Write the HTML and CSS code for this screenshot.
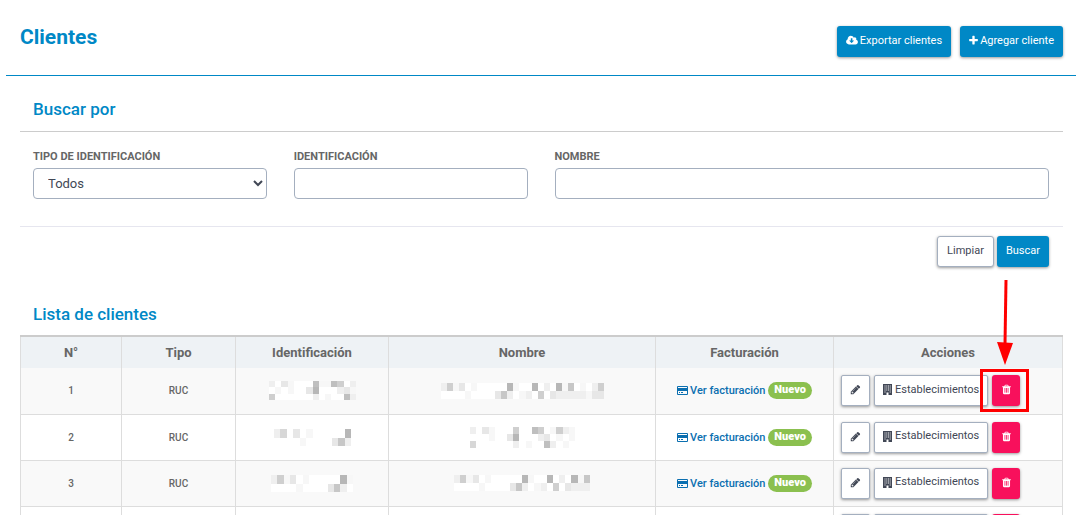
FILE: index.html
```
<!DOCTYPE html>
<html lang="es">

<head>
    <meta charset="UTF-8">
    <meta name="viewport" content="width=device-width, initial-scale=1.0">
    <title>Clientes</title>
    <link rel="stylesheet" href="styles.css">
</head>

<body>
    <svg class="sprite" aria-hidden="true">
        <symbol id="cloud" viewBox="-64 0 1920 1792">
            <path d="M1216 928q0-14-9-23t-23-9h-224v-352q0-13-9.500-22.500t-22.500-9.500h-192q-13 0-22.500 9.500t-9.500 22.500v352h-224q-13 0-22.500 9.500t-9.500 22.500q0 14 9 23l352 352q9 9 23 9t23-9l351-351q10-12 10-24zm640 224q0 159-112.500 271.500t-271.500 112.500h-1088q-185 0-316.500-131.500t-131.500-316.500q0-130 70-240t188-165q-2-30-2-43 0-212 150-362t362-150q156 0 285.500 87t188.500 231q71-62 166-62 106 0 181 75t75 181q0 76-41 138 130 31 213.500 135.500t83.500 238.500z"/>
        </symbol>
        <symbol id="plus" viewBox="192 0 1408 1792">
            <path d="M1600 736v192q0 40-28 68t-68 28h-416v416q0 40-28 68t-68 28h-192q-40 0-68-28t-28-68v-416h-416q-40 0-68-28t-28-68v-192q0-40 28-68t68-28h416v-416q0-40 28-68t68-28h192q40 0 68 28t28 68v416h416q40 0 68 28t28 68z"/>
        </symbol>
        <symbol id="pencil" viewBox="0 0 1792 1792">
            <path d="M491 1536l91-91-235-235-91 91v107h128v128h107zm523-928q0-22-22-22-10 0-17 7l-542 542q-7 7-7 17 0 22 22 22 10 0 17-7l542-542q7-7 7-17zm-54-192l416 416-832 832h-416v-416zm683 96q0 53-37 90l-166 166-416-416 166-165q36-38 90-38 53 0 91 38l235 234q37 39 37 91z"/>
        </symbol>
        <symbol id="trash" viewBox="192 0 1408 1792">
            <path d="M704 1376v-704q0-14-9-23t-23-9h-64q-14 0-23 9t-9 23v704q0 14 9 23t23 9h64q14 0 23-9t9-23zm256 0v-704q0-14-9-23t-23-9h-64q-14 0-23 9t-9 23v704q0 14 9 23t23 9h64q14 0 23-9t9-23zm256 0v-704q0-14-9-23t-23-9h-64q-14 0-23 9t-9 23v704q0 14 9 23t23 9h64q14 0 23-9t9-23zm-544-992h448l-48-117q-7-9-17-11h-317q-10 2-17 11zm928 32v64q0 14-9 23t-23 9h-96v948q0 83-47 143.500t-113 60.500h-832q-66 0-113-58.500t-47-141.500v-952h-96q-14 0-23-9t-9-23v-64q0-14 9-23t23-9h309l70-167q15-37 54-63t79-26h320q40 0 79 26t54 63l70 167h309q14 0 23 9t9 23z"/>
        </symbol>
        <symbol id="building" viewBox="0 0 9 11">
            <path fill-rule="evenodd" d="M0 0h9v11H0zM1.500 1.500v1h1v-1zM3.300 1.500v1h1v-1zM5 1.500v1h1v-1zM6.700 1.500v1h1v-1zM1.500 3.500v1h1v-1zM3.300 3.500v1h1v-1zM5 3.500v1h1v-1zM6.700 3.500v1h1v-1zM1.500 5.500v1h1v-1zM3.300 5.500v1h1v-1zM5 5.500v1h1v-1zM6.700 5.500v1h1v-1zM1.500 7.500v1h1v-1zM6.700 7.500v1h1v-1zM3.500 8.500v2.500h2V8.500z"/>
        </symbol>
        <symbol id="card" viewBox="0 0 11 9">
            <path fill-rule="evenodd" d="M1 0h9q1 0 1 1v7q0 1-1 1H1q-1 0-1-1V1q0-1 1-1zM1 1v1h9V1zM1 5v3h9V5zM2 6h1v1H2zM4 6h2v1H4z"/>
        </symbol>
    </svg>

    <div class="page">
        <header class="page-header">
            <h1>Clientes</h1>
            <div class="header-buttons">
                <button type="button" class="btn btn-primary"><svg class="icon icon-cloud"><use href="#cloud"/></svg>Exportar clientes</button>
                <button type="button" class="btn btn-primary"><svg class="icon"><use href="#plus"/></svg>Agregar cliente</button>
            </div>
        </header>

        <main class="content">
            <form class="search">
                <h2>Buscar por</h2>
                <div class="fields">
                    <div class="field">
                        <label for="tipo">TIPO DE IDENTIFICACIÓN</label>
                        <select id="tipo">
                            <option>Todos</option>
                            <option>RUC</option>
                        </select>
                    </div>
                    <div class="field">
                        <label for="identificacion">IDENTIFICACIÓN</label>
                        <input type="text" id="identificacion">
                    </div>
                    <div class="field field-wide">
                        <label for="nombre">NOMBRE</label>
                        <input type="text" id="nombre">
                    </div>
                </div>
                <div class="search-buttons">
                    <button type="reset" class="btn btn-light">Limpiar</button>
                    <button type="button" class="btn btn-primary">Buscar</button>
                </div>
            </form>

            <section class="list">
                <h2>Lista de clientes</h2>
                <table>
                    <colgroup>
                        <col class="col-num">
                        <col class="col-tipo">
                        <col class="col-id">
                        <col class="col-nombre">
                        <col class="col-fact">
                        <col class="col-acc">
                    </colgroup>
                    <thead>
                        <tr>
                            <th>N°</th>
                            <th>Tipo</th>
                            <th>Identificación</th>
                            <th>Nombre</th>
                            <th>Facturación</th>
                            <th>Acciones</th>
                        </tr>
                    </thead>
                    <tbody id="clientes"></tbody>
                </table>
            </section>
        </main>
    </div>

    <script src="script.js"></script>
</body>

</html>
```
FILE: styles.css
```
* {
    box-sizing: border-box;
}

body {
    font-family: Roboto, "Liberation Sans", sans-serif;
    background-color: #fff;
    color: #666;
    margin: 0;
}

.sprite {
    display: none;
}

.page {
    padding: 0 7px 0 6px;
}

.page-header {
    display: flex;
    justify-content: space-between;
    align-items: flex-start;
    padding: 26px 13px 18px 14px;
    border-bottom: 1px solid #0088c6;
}

h1 {
    margin: 0;
    font-size: 21px;
    line-height: 22px;
    font-weight: bold;
    color: #0088c6;
}

.header-buttons {
    display: flex;
    gap: 9px;
}

.content {
    padding: 0 13px 0 14px;
}

h2 {
    margin: 0;
    padding: 0 13px;
    font-size: 17px;
    line-height: 24px;
    font-weight: 500;
    color: #0088c6;
}

.search h2 {
    padding-top: 21px;
    padding-bottom: 10px;
    border-bottom: 1px solid #ccc;
}

.fields {
    display: grid;
    grid-template-columns: repeat(4, 1fr);
    gap: 27px;
    padding: 18px 14px 27px 13px;
    border-bottom: 1px solid #e6e6ef;
}

.field-wide {
    grid-column: span 2;
}

.field label {
    display: block;
    margin-bottom: 4px;
    font-size: 11px;
    line-height: 14px;
    font-weight: bold;
}

.field input,
.field select {
    display: block;
    width: 100%;
    height: 31px;
    padding: 0 10px;
    border: 1px solid #a4afbf;
    border-radius: 4px;
    background-color: #fff;
    font-family: inherit;
    font-size: 13px;
    color: #414755;
}

.field select {
    padding-right: 0;
}

.search-buttons {
    display: flex;
    justify-content: flex-end;
    gap: 3px;
    padding: 9px 14px 0 0;
}

.btn {
    display: inline-flex;
    align-items: center;
    justify-content: center;
    gap: 2px;
    height: 31px;
    padding: 0 9px 2px;
    border: 0;
    border-radius: 3px;
    font-family: inherit;
    font-size: 11px;
    line-height: 14px;
    white-space: nowrap;
    box-shadow: 0 1px 3px rgba(0, 0, 0, 0.4);
    cursor: pointer;
}

.btn-primary {
    background-color: #0088c6;
    color: #fff;
}

.btn-light {
    border: 1px solid #a4afbf;
    background-color: #fff;
    color: #414755;
}

.btn-danger {
    background-color: #f8105c;
    color: #fff;
}

.icon {
    width: 9px;
    height: 11px;
    fill: currentColor;
}

.icon-cloud {
    width: 12px;
}

.list {
    padding-top: 35px;
}

.list h2 {
    padding-bottom: 9px;
}

table {
    width: 100%;
    table-layout: fixed;
    border-collapse: collapse;
    border-top: 2px solid #ccc;
}

.col-num {
    width: 101px;
}

.col-tipo {
    width: 114px;
}

.col-id {
    width: 153px;
}

.col-fact {
    width: 178px;
}

.col-acc {
    width: 229px;
}

th,
td {
    padding: 0;
    border: 1px solid #ddd;
    text-align: center;
    vertical-align: middle;
}

th {
    height: 32px;
    background-color: #eef2f5;
    border-bottom: 0;
    font-size: 13px;
    line-height: 16px;
}

td {
    height: 46px;
    font-size: 10px;
    font-weight: 500;
}

tbody tr:nth-child(odd) {
    background-color: #f9f9f9;
}

tbody tr:first-child td {
    border-top: 0;
}

.mosaic {
    display: block;
    margin: 0 auto;
    shape-rendering: crispEdges;
}

.billing,
.actions {
    display: flex;
    align-items: center;
}

.billing {
    justify-content: center;
    gap: 3px;
}

.billing a {
    display: flex;
    align-items: center;
    gap: 2px;
    font-size: 11px;
    color: #0b6fb0;
    text-decoration: none;
}

.billing .icon {
    width: 11px;
    height: 9px;
}

.badge {
    padding: 0 6px 2px;
    border-radius: 9px;
    background-color: #8bc04f;
    color: #fff;
    font-size: 11px;
    line-height: 15px;
    font-weight: 900;
}

.actions {
    gap: 4px;
    padding-left: 7px;
}

.actions .btn-light {
    border-radius: 2px;
    padding: 0 8px 2px;
    gap: 3px;
}

.actions .edit,
.actions .btn-danger {
    width: 29px;
    padding: 0 0 2px;
}

.actions .btn-danger {
    width: 28px;
}

.actions .edit .icon {
    width: 11px;
}

.delete {
    display: flex;
    position: relative;
}

/* red frame and arrow over the delete button */
.callout {
    position: absolute;
    inset: -6px -9px -6px -12px;
    border: 3px solid #f00;
    pointer-events: none;
}

.arrow {
    position: absolute;
    left: 4px;
    bottom: 40px;
    width: 18px;
    height: 88px;
    pointer-events: none;
}
```
FILE: script.js
```
// Private data is drawn as a mosaic: one digit per block,
// 0 is white and 9 is the darkest grey
const clientes = [
    {
        id: { width: 87, height: 19, rows: ['20310008118602', '01010039000231', '60000002010082'] },
        nombre: { width: 163, height: 16, rows: ['261301000009100902091701026', '000010000372012060322222133'] }
    },
    {
        id: { width: 77, height: 17, rows: ['250301000009', '000010000372'] },
        nombre: { width: 105, height: 21, rows: ['20310006008601621', '00010039000230101', '50000002010082010'] }
    },
    {
        id: { width: 82, height: 17, rows: ['2613010000091', '0000100003720'] },
        nombre: { width: 136, height: 16, rows: ['2613010000091009020917', '0000100003720120603222'] }
    },
    {
        id: { width: 82, height: 17, rows: ['2503010000091', '0000100003720'] },
        nombre: { width: 105, height: 16, rows: ['20310006008601621', '00010039000230101'] }
    }
];

function shade(n) {
    const v = 255 - n * 8;
    return `rgb(${v},${v},${v})`;
}

function mosaic(m) {
    let rects = '';
    m.rows.forEach((row, y) => {
        [...row].forEach((c, x) => {
            rects += `<rect x="${x}" y="${y}" width="1" height="1" fill="${shade(Number(c))}"/>`;
        });
    });
    return `<svg class="mosaic" width="${m.width}" height="${m.height}" viewBox="0 0 ${m.rows[0].length} ${m.rows.length}" preserveAspectRatio="none">${rects}</svg>`;
}

const callout = `
    <span class="callout"></span>
    <svg class="arrow" viewBox="0 0 18 88">
        <path d="M10 2L9 66" stroke="#f00" stroke-width="3" fill="none"/>
        <path d="M1 64l16 1-8 22z" fill="#f00"/>
    </svg>`;

document.getElementById('clientes').innerHTML = clientes.map((c, i) => `
    <tr>
        <td>${i + 1}</td>
        <td>RUC</td>
        <td>${mosaic(c.id)}</td>
        <td>${mosaic(c.nombre)}</td>
        <td>
            <div class="billing">
                <a href="#"><svg class="icon"><use href="#card"/></svg>Ver facturación</a>
                <span class="badge">Nuevo</span>
            </div>
        </td>
        <td>
            <div class="actions">
                <button type="button" class="btn btn-light edit" aria-label="Editar"><svg class="icon"><use href="#pencil"/></svg></button>
                <button type="button" class="btn btn-light"><svg class="icon"><use href="#building"/></svg>Establecimientos</button>
                <span class="delete">
                    <button type="button" class="btn btn-danger" aria-label="Eliminar"><svg class="icon"><use href="#trash"/></svg></button>
                    ${i === 0 ? callout : ''}
                </span>
            </div>
        </td>
    </tr>`).join('');
```
